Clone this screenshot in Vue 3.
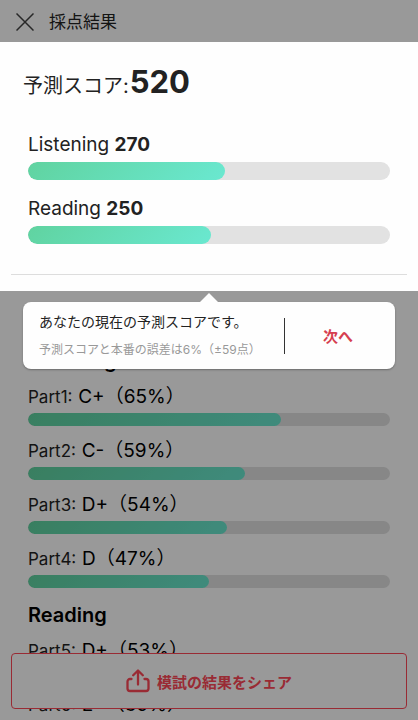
<template>
  <div class="result-page">
    <header class="header">
      <button type="button" class="close-button" aria-label="閉じる">
        <svg class="close-icon" viewBox="0 0 18 18" fill="none" stroke="currentColor" stroke-width="1.5">
          <path d="M0.5 0.5L17.5 17.5M17.5 0.5L0.5 17.5" />
        </svg>
      </button>
      <h1 class="header-title">採点結果</h1>
    </header>

    <section class="score">
      <p class="score-total">予測スコア: <strong>{{ total }}</strong></p>
      <div v-for="item in scores" :key="item.name" class="score-item">
        <p class="score-label">{{ item.name }} <strong>{{ item.score }}</strong></p>
        <div class="bar bar-large">
          <div class="bar-fill" :style="{ width: item.score / 4.95 + '%' }"></div>
        </div>
      </div>
      <hr class="score-line" />

      <div class="tooltip" role="dialog">
        <div class="tooltip-body">
          <p class="tooltip-title">あなたの現在の予測スコアです。</p>
          <p class="tooltip-note">予測スコアと本番の誤差は6%（±59点）</p>
        </div>
        <button type="button" class="next-button">次へ</button>
      </div>
    </section>

    <main class="details">
      <section v-for="group in groups" :key="group.name" class="group">
        <h2 class="group-title">{{ group.name }}</h2>
        <div v-for="part in group.parts" :key="part.name" class="part">
          <p class="part-label">{{ part.name }}: <span class="part-grade">{{ part.grade }}（{{ part.rate }}%）</span></p>
          <div class="bar">
            <div class="bar-fill" :style="{ width: part.bar + '%' }"></div>
          </div>
        </div>
      </section>
    </main>

    <button type="button" class="share-button">
      <svg class="share-icon" viewBox="0 0 24 24" fill="none" stroke="currentColor" stroke-width="2.3" stroke-linecap="round" stroke-linejoin="round">
        <path d="M5.500 10H4A2.500 2.500 0 0 0 1.500 12.500V19.500A2.500 2.500 0 0 0 4 22H20A2.500 2.500 0 0 0 22.500 19.500V12.500A2.500 2.500 0 0 0 20 10H18.500" />
        <path d="M12 15.500V2M7.200 6.200L12 1.500L16.800 6.200" />
      </svg>
      模試の結果をシェア
    </button>

    <div class="overlay"></div>
  </div>
</template>

<script setup>
import { computed } from 'vue'

const scores = [
  { name: 'Listening', score: 270 },
  { name: 'Reading', score: 250 }
]

const total = computed(() => scores.reduce((sum, item) => sum + item.score, 0))

const groups = [
  {
    name: 'Listening',
    parts: [
      { name: 'Part1', grade: 'C+', rate: 65, bar: 70 },
      { name: 'Part2', grade: 'C-', rate: 59, bar: 60 },
      { name: 'Part3', grade: 'D+', rate: 54, bar: 55 },
      { name: 'Part4', grade: 'D', rate: 47, bar: 50 }
    ]
  },
  {
    name: 'Reading',
    parts: [
      { name: 'Part5', grade: 'D+', rate: 53, bar: 54 },
      { name: 'Part6', grade: 'E+', rate: 39, bar: 40 }
    ]
  }
]
</script>

<style>
body {
  margin: 0;
}
</style>

<style scoped>
.result-page {
  position: relative;
  height: 100vh;
  overflow: hidden;
  background: #fff;
  color: #222;
  font-family: Inter, 'Noto Sans CJK JP', sans-serif;
}

p,
h1,
h2 {
  margin: 0;
}

button {
  font-family: inherit;
  cursor: pointer;
}

.header {
  display: flex;
  align-items: center;
  gap: 15px;
  box-sizing: border-box;
  height: 42px;
  padding: 2px 16px 0;
}

.close-button {
  display: flex;
  padding: 0;
  border: 0;
  background: none;
  color: #444;
}

.close-icon {
  width: 18px;
  height: 18px;
}

.header-title {
  font-size: 17px;
  font-weight: 400;
  line-height: 24px;
}

.score {
  position: relative;
  z-index: 3;
  padding: 21px 28px 16px;
  background: #fefefe;
}

.score-total {
  display: flex;
  align-items: baseline;
  gap: 1px;
  margin-left: -5px;
  font-size: 20px;
  line-height: 38px;
}

.score-total strong {
  font-size: 31px;
}

.score-item {
  margin-top: 16px;
}

.score-total + .score-item {
  margin-top: 27px;
}

.score-label {
  margin-bottom: 4px;
  font-size: 19px;
  line-height: 26px;
}

.bar {
  height: 13px;
  border-radius: 9px;
  background: #e2e2e2;
  overflow: hidden;
}

.bar-large {
  height: 18px;
}

.bar-fill {
  height: 100%;
  border-radius: 9px;
  background: linear-gradient(135deg, #60d3a0, #6ae8d0);
}

.score-line {
  height: 1px;
  margin: 30px -17px 0;
  border: 0;
  background: #ddd;
}

.tooltip {
  position: absolute;
  top: calc(100% + 11px);
  left: 23px;
  right: 23px;
  display: flex;
  align-items: center;
  box-sizing: border-box;
  height: 67px;
  padding-right: 4px;
  border-radius: 8px;
  background: #fefefe;
  box-shadow: 0 1px 2px rgba(0, 0, 0, 0.3);
}

.tooltip::before {
  content: '';
  position: absolute;
  bottom: 100%;
  left: 50%;
  margin-left: -9px;
  border: solid transparent;
  border-width: 0 9px 9px;
  border-bottom-color: #fefefe;
}

.tooltip-body {
  flex: none;
  width: 245px;
  padding-left: 16px;
  white-space: nowrap;
}

.tooltip-title {
  padding-bottom: 12px;
  font-size: 14px;
  line-height: 16px;
}

.tooltip-note {
  color: #999;
  font-size: 12px;
  line-height: 16px;
}

.next-button {
  flex: 1;
  height: 36px;
  padding: 0;
  border: 0;
  border-left: 1px solid #333;
  background: none;
  color: #d63f50;
  font-size: 15px;
  font-weight: 700;
}

.details {
  padding: 57px 28px 0;
}

.group {
  padding-bottom: 2px;
}

.group-title {
  color: #000;
  font-size: 20px;
  font-weight: 600;
  line-height: 26px;
}

.part {
  padding: 10px 0 12px;
}

.part + .part {
  padding-top: 0;
}

.part-label {
  margin-bottom: 3px;
  font-size: 17px;
  line-height: 26px;
}

.part-grade {
  margin-left: 1px;
  color: #000;
  font-size: 19px;
  line-height: 20px;
}

.share-button {
  position: absolute;
  right: 11px;
  bottom: 11px;
  left: 11px;
  z-index: 1;
  display: flex;
  align-items: center;
  justify-content: center;
  gap: 7px;
  height: 56px;
  border: 1px solid #ff4858;
  border-radius: 4px;
  background: #fff;
  color: #ff4858;
  font-size: 15px;
  font-weight: 700;
}

.share-icon {
  width: 24px;
  height: 24px;
}

.overlay {
  position: absolute;
  inset: 0;
  z-index: 2;
  background: rgba(0, 0, 0, 0.4);
}
</style>
